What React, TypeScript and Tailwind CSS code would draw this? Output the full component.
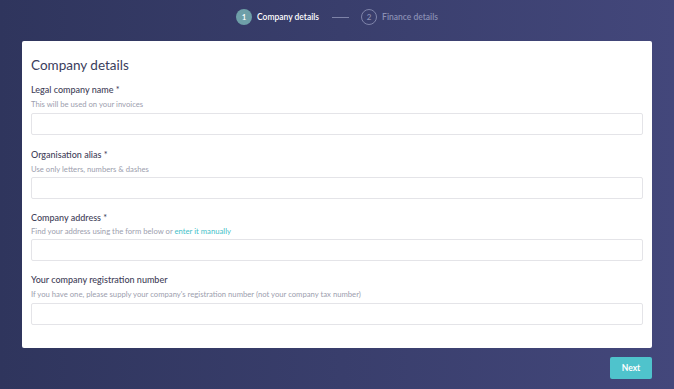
import React from "react";

function Field({
  label,
  hint,
  hintClass = "h-[14px] leading-[14px]",
  inputMt = "mt-[2px]",
}: {
  label: string;
  hint: React.ReactNode;
  hintClass?: string;
  inputMt?: string;
}) {
  return (
    <div>
      <div className="h-[14px] text-[9px] leading-[14px] font-medium text-[#3f4159]">{label}</div>
      <div className={`text-[7.7px] text-[#9c9eae] ${hintClass}`}>{hint}</div>
      <input
        className={`${inputMt} block h-[22px] w-full rounded-[2px] border border-[#e4e4e8] bg-white outline-none`}
      />
    </div>
  );
}

export default function App() {
  return (
    <div
      className="flex min-h-screen w-full flex-col bg-linear-to-r from-[#2f355d] to-[#43477b]"
      style={{ fontFamily: "Lato, 'Open Sans', sans-serif" }}
    >
      <div className="flex h-[34px] items-center justify-center">
        <div className="flex items-center">
          <div className="flex h-[16px] w-[16px] items-center justify-center rounded-full bg-[#6e9fa8] text-[8px] font-semibold text-white">
            1
          </div>
          <span className="ml-[5px] text-[8.5px] font-semibold text-white">Company details</span>
          <div className="ml-[13px] h-px w-[17px] bg-[#7e83a8]" />
          <div className="ml-[12px] flex h-[16px] w-[16px] items-center justify-center rounded-full border border-[#7f84aa] text-[8px] font-semibold text-[#8a8fb4]">
            2
          </div>
          <span className="ml-[5px] text-[8.5px] font-semibold text-[#8a8fb4]">Finance details</span>
        </div>
      </div>
      <div className="mx-[22px] mt-[7px] rounded-[2px] bg-white px-[9px] pt-[12px] pb-[23px]">
        <h1 className="h-[24px] text-[13.5px] leading-[24px] font-normal text-[#3a3d5c]">Company details</h1>
        <div className="mt-[6px] flex flex-col gap-[13px]">
          <Field label="Legal company name *" hint="This will be used on your invoices" />
          <Field label="Organisation alias *" hint="Use only letters, numbers & dashes" inputMt="mt-[1px]" />
          <div className="-mt-[1px]">
            <Field
              label="Company address *"
              hint={
                <>
                  Find your address using the form below or{" "}
                  <span className="text-[#45bfc9]">enter it manually</span>
                </>
              }
              hintClass="h-[12px] leading-[12px] text-[#7d8093]"
              inputMt="mt-[2px]"
            />
          </div>
          <div className="-mt-[1px]">
            <Field
              label="Your company registration number"
              hint="If you have one, please supply your company's registration number (not your company tax number)"
            />
          </div>
        </div>
      </div>
      <div className="mx-[22px] mt-[9px] flex justify-end">
        <button className="h-[22px] w-[42px] rounded-[2px] bg-[#4fc3cc] text-[8.5px] font-bold text-white">
          Next
        </button>
      </div>
    </div>
  );
}
